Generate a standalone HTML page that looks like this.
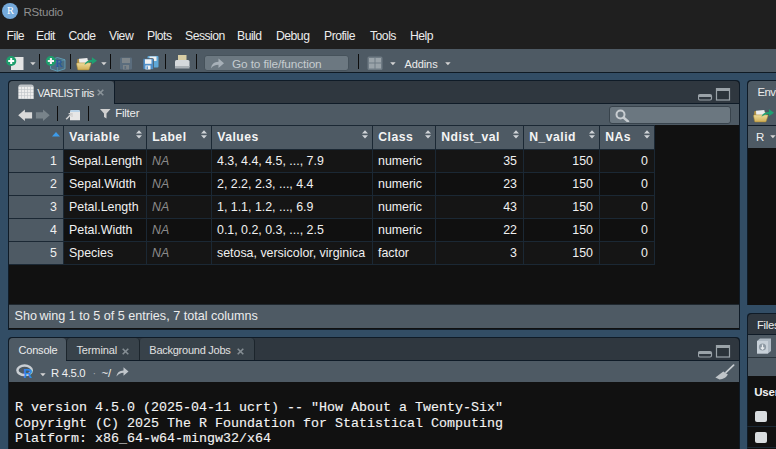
<!DOCTYPE html>
<html><head><meta charset="utf-8">
<style>
*{margin:0;padding:0;box-sizing:border-box}
html,body{width:776px;height:449px;overflow:hidden}
body{position:relative;background:#324d65;font-family:"Liberation Sans",sans-serif}
.a{position:absolute}
.t{position:absolute;white-space:nowrap;line-height:1}
</style></head><body>
<div class="a" style="left:0px;top:0px;width:776px;height:24px;background:#1f1f1f;"></div><svg class="a" style="left:2px;top:3px;" width="16" height="16" viewBox="0 0 16 16"><circle cx="8" cy="8" r="8" fill="#75aadb"/></svg><div class="t" style="left:5.4px;top:6.01px;font-size:10.5px;color:#ffffff;font-weight:normal;font-style:normal;font-family:'Liberation Serif',serif;width:10px;text-align:center;">R</div><div class="t" style="left:23.5px;top:6.86px;font-size:11.5px;color:#8f8f8f;font-weight:normal;font-style:normal;font-family:'Liberation Sans',sans-serif;letter-spacing:-0.2px;">RStudio</div><div class="a" style="left:0px;top:24px;width:776px;height:25px;background:#1f1f1f;"></div><div class="t" style="left:6.5px;top:30.27px;font-size:12.2px;color:#ececec;font-weight:normal;font-style:normal;font-family:'Liberation Sans',sans-serif;letter-spacing:-0.5px;">File</div><div class="t" style="left:36px;top:30.27px;font-size:12.2px;color:#ececec;font-weight:normal;font-style:normal;font-family:'Liberation Sans',sans-serif;letter-spacing:-0.5px;">Edit</div><div class="t" style="left:68.5px;top:30.27px;font-size:12.2px;color:#ececec;font-weight:normal;font-style:normal;font-family:'Liberation Sans',sans-serif;letter-spacing:-0.5px;">Code</div><div class="t" style="left:109px;top:30.27px;font-size:12.2px;color:#ececec;font-weight:normal;font-style:normal;font-family:'Liberation Sans',sans-serif;letter-spacing:-0.5px;">View</div><div class="t" style="left:147px;top:30.27px;font-size:12.2px;color:#ececec;font-weight:normal;font-style:normal;font-family:'Liberation Sans',sans-serif;letter-spacing:-0.5px;">Plots</div><div class="t" style="left:185px;top:30.27px;font-size:12.2px;color:#ececec;font-weight:normal;font-style:normal;font-family:'Liberation Sans',sans-serif;letter-spacing:-0.5px;">Session</div><div class="t" style="left:237px;top:30.27px;font-size:12.2px;color:#ececec;font-weight:normal;font-style:normal;font-family:'Liberation Sans',sans-serif;letter-spacing:-0.5px;">Build</div><div class="t" style="left:276px;top:30.27px;font-size:12.2px;color:#ececec;font-weight:normal;font-style:normal;font-family:'Liberation Sans',sans-serif;letter-spacing:-0.5px;">Debug</div><div class="t" style="left:324px;top:30.27px;font-size:12.2px;color:#ececec;font-weight:normal;font-style:normal;font-family:'Liberation Sans',sans-serif;letter-spacing:-0.5px;">Profile</div><div class="t" style="left:370px;top:30.27px;font-size:12.2px;color:#ececec;font-weight:normal;font-style:normal;font-family:'Liberation Sans',sans-serif;letter-spacing:-0.5px;">Tools</div><div class="t" style="left:410px;top:30.27px;font-size:12.2px;color:#ececec;font-weight:normal;font-style:normal;font-family:'Liberation Sans',sans-serif;letter-spacing:-0.5px;">Help</div><div class="a" style="left:0px;top:49px;width:776px;height:23px;background:#4e5a64;"></div><div class="a" style="left:0px;top:72px;width:776px;height:1px;background:#0f1a24;"></div><svg class="a" style="left:5px;top:55px;" width="20" height="16" viewBox="0 0 20 16"><rect x="6" y="2" width="12.5" height="13" fill="#e4e4e4"/><circle cx="6.2" cy="6" r="5.1" fill="#1e9e6c"/><path d="M6.2 3V9M3.2 6H9.2" stroke="#fff" stroke-width="2"/></svg><svg class="a" style="left:29.8px;top:62px;" width="6" height="4" viewBox="0 0 6 4"><path d="M0.2 0.2H5.6L2.9 3.2Z" fill="#d4d4d4"/></svg><div class="a" style="left:39px;top:54px;width:1px;height:15px;background:#0d0d0d;"></div><svg class="a" style="left:45px;top:55px;" width="22" height="17" viewBox="0 0 22 17"><path d="M5.5 4.8L12.5 2.5L20 4.8V13.8L12.5 16.2L5.5 13.8Z" fill="#4d8fb0" fill-opacity="0.38" stroke="#67b3cf" stroke-opacity="0.75" stroke-width="0.9"/><path d="M5.5 4.8L12.5 7.2L20 4.8M12.5 7.2V16.2" stroke="#67b3cf" stroke-opacity="0.5" stroke-width="0.8" fill="none"/><text x="10.6" y="11.8" font-family="Liberation Serif" font-weight="bold" font-size="9.8" fill="#2a5a9c">R</text><circle cx="5.9" cy="6" r="5.1" fill="#1e9e6c"/><path d="M5.9 2.9V9.1M2.8 6H9" stroke="#f4f0f2" stroke-width="2.1"/></svg><div class="a" style="left:70px;top:54px;width:1px;height:15px;background:#0d0d0d;"></div><svg class="a" style="left:76px;top:56px;" width="22" height="15" viewBox="0 0 22 15"><defs><linearGradient id="fg1" x1="0" y1="0" x2="0" y2="1"><stop offset="0" stop-color="#efdc9c"/><stop offset="1" stop-color="#cfae55"/></linearGradient></defs><path d="M1.2 4.2Q1.2 3 2.4 3H5.8L7 4.2H12.5Q13.3 4.2 13.3 5V8H1.2Z" fill="#b39448"/><path d="M3 2.7L11.3 2.1L12.7 8H3.3Z" fill="#ededed"/><path d="M0.5 7.7Q0.6 6.9 1.3 6.9H14.4Q15.3 6.9 15 7.7L13.2 13.3Q13 13.9 12.4 13.9H2.3Q1.7 13.9 1.6 13.3Z" fill="url(#fg1)" stroke="#a88936" stroke-width="0.55"/><path d="M8.6 8.9C9.3 5.7 12.2 4 15.9 4V1.3L21 4.8L15.9 8.3V5.9C12.9 5.9 10.5 6.9 8.6 8.9Z" fill="#1fa072"/></svg><svg class="a" style="left:100.5px;top:62px;" width="6" height="4" viewBox="0 0 6 4"><path d="M0.2 0.2H5.6L2.9 3.2Z" fill="#d4d4d4"/></svg><div class="a" style="left:110px;top:54px;width:1px;height:15px;background:#0d0d0d;"></div><svg class="a" style="left:119px;top:57px;" width="14" height="13" viewBox="0 0 14 13"><rect x="1" y="0.5" width="12" height="12" rx="1" fill="#5b6d7d"/><rect x="3" y="1" width="8" height="5" fill="#7e868b"/><rect x="4" y="8" width="6" height="4.5" fill="#7c8489"/><rect x="5.5" y="9" width="1.6" height="3" fill="#5b6d7d"/></svg><svg class="a" style="left:142px;top:56px;" width="17" height="14" viewBox="0 0 17 14"><rect x="5.5" y="0" width="11" height="11.5" rx="1" fill="#5fa8d8"/><rect x="7.5" y="0.5" width="7" height="4.5" fill="#f0f0f0"/><rect x="1" y="2.5" width="10.5" height="11" rx="1" fill="#4f8fc9" stroke="#4e5a64" stroke-width="0.8"/><rect x="3" y="3.3" width="6.5" height="4.5" fill="#f2f2f2"/><rect x="3.5" y="9.5" width="5" height="4" fill="#f2f2f2"/><rect x="4.5" y="10.3" width="1.4" height="3" fill="#4f8fc9"/></svg><div class="a" style="left:165px;top:54px;width:1px;height:15px;background:#0d0d0d;"></div><svg class="a" style="left:174px;top:55px;" width="17" height="15" viewBox="0 0 17 15"><rect x="4" y="0" width="8.5" height="6" fill="#d8cda4"/><path d="M1 6.5Q1 5 2.5 5H14Q15.5 5 15.5 6.5V12H1Z" fill="#d4d8db"/><rect x="1" y="11" width="14.5" height="2.5" fill="#a9b0b5"/></svg><div class="a" style="left:196px;top:54px;width:1px;height:15px;background:#0d0d0d;"></div><div class="a" style="left:204px;top:55px;width:145px;height:16px;background:#6c7881;border-radius:3px;border:1px solid #46525b"></div><svg class="a" style="left:210px;top:58px;" width="15" height="11" viewBox="0 0 15 11"><path d="M1 10.5C1.5 6 4 3.8 8.5 3.7V0.5L14 5.2L8.5 10V6.8C5 6.8 2.8 8 1 10.5Z" fill="#a7b0b8"/></svg><div class="t" style="left:232px;top:58.61px;font-size:11.8px;color:#c6ccd0;font-weight:normal;font-style:normal;font-family:'Liberation Sans',sans-serif;letter-spacing:-0.12px;">Go to file/function</div><div class="a" style="left:358px;top:54px;width:1px;height:15px;background:#0d0d0d;"></div><svg class="a" style="left:367px;top:56px;" width="16" height="14" viewBox="0 0 16 14"><rect x="0.5" y="0.5" width="15" height="13.5" rx="1.5" fill="#6f7b84"/><rect x="2" y="2" width="5.5" height="4.5" fill="#9aa3a9"/><rect x="8.5" y="2" width="5.5" height="4.5" fill="#9aa3a9"/><rect x="2" y="7.5" width="5.5" height="5" fill="#9aa3a9"/><rect x="8.5" y="7.5" width="5.5" height="5" fill="#9aa3a9"/></svg><svg class="a" style="left:389.5px;top:62px;" width="6" height="4" viewBox="0 0 6 4"><path d="M0.2 0.2H5.6L2.9 3.2Z" fill="#d4d4d4"/></svg><div class="t" style="left:404.5px;top:58.69px;font-size:11px;color:#ececec;font-weight:normal;font-style:normal;font-family:'Liberation Sans',sans-serif;letter-spacing:-0.1px;">Addins</div><svg class="a" style="left:444.5px;top:62px;" width="6" height="4" viewBox="0 0 6 4"><path d="M0.2 0.2H5.6L2.9 3.2Z" fill="#d4d4d4"/></svg><div class="a" style="left:8px;top:80px;width:732px;height:250px;background:#0f1b27;border-radius:4px 4px 0 0"></div><div class="a" style="left:9px;top:81px;width:730px;height:248px;background:#111111;border-radius:4px 4px 0 0"></div><div class="a" style="left:9px;top:81px;width:730px;height:22px;background:#2f373f;border-radius:4px 4px 0 0"></div><div class="a" style="left:114px;top:103px;width:625px;height:1px;background:#0f1b27;"></div><div class="a" style="left:114px;top:81px;width:1px;height:22px;background:#0f1b27;"></div><div class="a" style="left:9px;top:81px;width:105px;height:23px;background:#4e5a64;border-radius:4px 4px 0 0"></div><svg class="a" style="left:18px;top:84px;" width="16" height="15" viewBox="0 0 16 15"><path d="M0.3 3Q0.3 0.5 2.8 0.5H13.2Q15.7 0.5 15.7 3V15H0.3Z" fill="#bfc4c8"/><rect x="0.70" y="2.90" width="2.45" height="2.45" fill="#ededed"/><rect x="0.70" y="5.95" width="2.45" height="2.45" fill="#ededed"/><rect x="0.70" y="9.00" width="2.45" height="2.45" fill="#ededed"/><rect x="0.70" y="12.05" width="2.45" height="2.45" fill="#ededed"/><rect x="3.74" y="2.90" width="2.45" height="2.45" fill="#ededed"/><rect x="3.74" y="5.95" width="2.45" height="2.45" fill="#ededed"/><rect x="3.74" y="9.00" width="2.45" height="2.45" fill="#ededed"/><rect x="3.74" y="12.05" width="2.45" height="2.45" fill="#ededed"/><rect x="6.78" y="2.90" width="2.45" height="2.45" fill="#ededed"/><rect x="6.78" y="5.95" width="2.45" height="2.45" fill="#ededed"/><rect x="6.78" y="9.00" width="2.45" height="2.45" fill="#ededed"/><rect x="6.78" y="12.05" width="2.45" height="2.45" fill="#ededed"/><rect x="9.82" y="2.90" width="2.45" height="2.45" fill="#ededed"/><rect x="9.82" y="5.95" width="2.45" height="2.45" fill="#ededed"/><rect x="9.82" y="9.00" width="2.45" height="2.45" fill="#ededed"/><rect x="9.82" y="12.05" width="2.45" height="2.45" fill="#ededed"/><rect x="12.86" y="2.90" width="2.45" height="2.45" fill="#ededed"/><rect x="12.86" y="5.95" width="2.45" height="2.45" fill="#ededed"/><rect x="12.86" y="9.00" width="2.45" height="2.45" fill="#ededed"/><rect x="12.86" y="12.05" width="2.45" height="2.45" fill="#ededed"/></svg><div class="t" style="left:37.3px;top:88.19px;font-size:11px;color:#ececec;font-weight:normal;font-style:normal;font-family:'Liberation Sans',sans-serif;letter-spacing:-0.45px;">VARLIST iris</div><svg class="a" style="left:97px;top:89px;" width="7" height="7" viewBox="0 0 7 7"><path d="M0.7 0.7L6.3 6.3M6.3 0.7L0.7 6.3" stroke="#8b949a" stroke-width="1.6"/></svg><svg class="a" style="left:698px;top:88px;" width="33" height="13" viewBox="0 0 33 13"><rect x="0.5" y="6.5" width="13" height="5.5" rx="1.5" fill="none" stroke="#9aa2a8" stroke-width="1.2"/><rect x="1" y="7" width="12" height="2" fill="#9aa2a8"/><rect x="18.5" y="0.6" width="13" height="11.4" fill="#2b333a" stroke="#9aa2a8" stroke-width="1.2"/><rect x="18.5" y="0.6" width="13" height="2.4" fill="#9aa2a8"/></svg><div class="a" style="left:9px;top:104px;width:730px;height:21px;background:#4e5a64;"></div><svg class="a" style="left:18px;top:109px;" width="32" height="13" viewBox="0 0 32 13"><path d="M0.2 6.3L6.9 0.6V3.3H14.1V9.6H6.9V12.1Z" fill="#dadada"/><path d="M31.7 6.3L25 0.6V3.3H17.9V9.6H25V12.1Z" fill="#78838a"/></svg><div class="a" style="left:57px;top:106px;width:1px;height:15px;background:#0d0d0d;"></div><svg class="a" style="left:65px;top:109px;" width="16" height="12" viewBox="0 0 16 12"><path d="M5 2.5Q5 0.9 6.6 0.9H13.4Q15 0.9 15 2.5V11.2H5Z" fill="#e6e6e6"/><path d="M5 2.5Q5 0.9 6.6 0.9H13.4Q15 0.9 15 2.5V3H5Z" fill="#b9d3e8"/><path d="M1.2 10.2L6.6 4.8" stroke="#d0d0d0" stroke-width="1.6"/><path d="M3.6 4.6H7V8" stroke="#d0d0d0" stroke-width="1.3" fill="none"/></svg><div class="a" style="left:88px;top:106px;width:1px;height:15px;background:#0d0d0d;"></div><svg class="a" style="left:100px;top:109px;" width="11" height="10" viewBox="0 0 11 10"><path d="M0 0H10.5L6.5 4.5V9.5L4 8V4.5Z" fill="#d0d0d0"/></svg><div class="t" style="left:115.2px;top:108.35px;font-size:11.4px;color:#ececec;font-weight:normal;font-style:normal;font-family:'Liberation Sans',sans-serif;letter-spacing:-0.2px;">Filter</div><div class="a" style="left:609px;top:106px;width:122px;height:18px;background:#6b7780;border-radius:3px;border:1px solid #38434c"></div><svg class="a" style="left:615px;top:109px;" width="15" height="13" viewBox="0 0 15 13"><circle cx="5.5" cy="5.5" r="4" fill="none" stroke="#c8cdd1" stroke-width="2"/><path d="M8.5 8.5L13 12.5" stroke="#c8cdd1" stroke-width="2.4" stroke-linecap="round"/></svg><div class="a" style="left:9px;top:125px;width:646px;height:140px;background:#1b2834;"></div><div class="a" style="left:9px;top:126px;width:54px;height:23px;background:#4e5a64;"></div><div class="a" style="left:64px;top:126px;width:82px;height:23px;background:#4e5a64;"></div><div class="a" style="left:147px;top:126px;width:64px;height:23px;background:#4e5a64;"></div><div class="a" style="left:212px;top:126px;width:160px;height:23px;background:#4e5a64;"></div><div class="a" style="left:373px;top:126px;width:62px;height:23px;background:#4e5a64;"></div><div class="a" style="left:436px;top:126px;width:87px;height:23px;background:#4e5a64;"></div><div class="a" style="left:524px;top:126px;width:75px;height:23px;background:#4e5a64;"></div><div class="a" style="left:600px;top:126px;width:54px;height:23px;background:#4e5a64;"></div><div class="t" style="left:69.2px;top:130.67px;font-size:12.2px;color:#f4f4f4;font-weight:bold;font-style:normal;font-family:'Liberation Sans',sans-serif;letter-spacing:0.5px;">Variable</div><svg class="a" style="left:135.5px;top:129.5px;" width="6" height="9" viewBox="0 0 6 9"><path d="M0 3.5L3 0.3L6 3.5Z M0 5.3L3 8.5L6 5.3Z" fill="#cfd3d7"/></svg><div class="t" style="left:152.2px;top:130.67px;font-size:12.2px;color:#f4f4f4;font-weight:bold;font-style:normal;font-family:'Liberation Sans',sans-serif;letter-spacing:0.5px;">Label</div><svg class="a" style="left:200.5px;top:129.5px;" width="6" height="9" viewBox="0 0 6 9"><path d="M0 3.5L3 0.3L6 3.5Z M0 5.3L3 8.5L6 5.3Z" fill="#cfd3d7"/></svg><div class="t" style="left:217.2px;top:130.67px;font-size:12.2px;color:#f4f4f4;font-weight:bold;font-style:normal;font-family:'Liberation Sans',sans-serif;letter-spacing:0.5px;">Values</div><svg class="a" style="left:361.5px;top:129.5px;" width="6" height="9" viewBox="0 0 6 9"><path d="M0 3.5L3 0.3L6 3.5Z M0 5.3L3 8.5L6 5.3Z" fill="#cfd3d7"/></svg><div class="t" style="left:378.2px;top:130.67px;font-size:12.2px;color:#f4f4f4;font-weight:bold;font-style:normal;font-family:'Liberation Sans',sans-serif;letter-spacing:0.5px;">Class</div><svg class="a" style="left:424.5px;top:129.5px;" width="6" height="9" viewBox="0 0 6 9"><path d="M0 3.5L3 0.3L6 3.5Z M0 5.3L3 8.5L6 5.3Z" fill="#cfd3d7"/></svg><div class="t" style="left:441.2px;top:130.67px;font-size:12.2px;color:#f4f4f4;font-weight:bold;font-style:normal;font-family:'Liberation Sans',sans-serif;letter-spacing:0.5px;">Ndist_val</div><svg class="a" style="left:512.5px;top:129.5px;" width="6" height="9" viewBox="0 0 6 9"><path d="M0 3.5L3 0.3L6 3.5Z M0 5.3L3 8.5L6 5.3Z" fill="#cfd3d7"/></svg><div class="t" style="left:529.2px;top:130.67px;font-size:12.2px;color:#f4f4f4;font-weight:bold;font-style:normal;font-family:'Liberation Sans',sans-serif;letter-spacing:0.5px;">N_valid</div><svg class="a" style="left:588.5px;top:129.5px;" width="6" height="9" viewBox="0 0 6 9"><path d="M0 3.5L3 0.3L6 3.5Z M0 5.3L3 8.5L6 5.3Z" fill="#cfd3d7"/></svg><div class="t" style="left:605.2px;top:130.67px;font-size:12.2px;color:#f4f4f4;font-weight:bold;font-style:normal;font-family:'Liberation Sans',sans-serif;letter-spacing:0.5px;">NAs</div><svg class="a" style="left:643.5px;top:129.5px;" width="6" height="9" viewBox="0 0 6 9"><path d="M0 3.5L3 0.3L6 3.5Z M0 5.3L3 8.5L6 5.3Z" fill="#cfd3d7"/></svg><svg class="a" style="left:52px;top:132px;" width="8" height="5" viewBox="0 0 8 5"><path d="M0 4.5L4 0L8 4.5Z" fill="#3d9bea"/></svg><div class="a" style="left:9px;top:150px;width:54px;height:22px;background:#4e5a64;"></div><div class="a" style="left:64px;top:150px;width:82px;height:22px;background:#151515;"></div><div class="a" style="left:147px;top:150px;width:64px;height:22px;background:#151515;"></div><div class="a" style="left:212px;top:150px;width:160px;height:22px;background:#151515;"></div><div class="a" style="left:373px;top:150px;width:62px;height:22px;background:#151515;"></div><div class="a" style="left:436px;top:150px;width:87px;height:22px;background:#151515;"></div><div class="a" style="left:524px;top:150px;width:75px;height:22px;background:#151515;"></div><div class="a" style="left:600px;top:150px;width:54px;height:22px;background:#151515;"></div><div class="t" style="left:-3px;top:154.50px;font-size:12.4px;color:#f0f0f0;font-weight:normal;font-style:normal;font-family:'Liberation Sans',sans-serif;width:60px;text-align:right;">1</div><div class="t" style="left:69px;top:154.50px;font-size:12.4px;color:#f0f0f0;font-weight:normal;font-style:normal;font-family:'Liberation Sans',sans-serif;">Sepal.Length</div><div class="t" style="left:152px;top:154.50px;font-size:12.4px;color:#8a8a8a;font-weight:normal;font-style:italic;font-family:'Liberation Sans',sans-serif;">NA</div><div class="t" style="left:217px;top:154.50px;font-size:12.4px;color:#f0f0f0;font-weight:normal;font-style:normal;font-family:'Liberation Sans',sans-serif;">4.3, 4.4, 4.5, ..., 7.9</div><div class="t" style="left:378px;top:154.50px;font-size:12.4px;color:#f0f0f0;font-weight:normal;font-style:normal;font-family:'Liberation Sans',sans-serif;">numeric</div><div class="t" style="left:457px;top:154.50px;font-size:12.4px;color:#f0f0f0;font-weight:normal;font-style:normal;font-family:'Liberation Sans',sans-serif;width:60px;text-align:right;">35</div><div class="t" style="left:533px;top:154.50px;font-size:12.4px;color:#f0f0f0;font-weight:normal;font-style:normal;font-family:'Liberation Sans',sans-serif;width:60px;text-align:right;">150</div><div class="t" style="left:588px;top:154.50px;font-size:12.4px;color:#f0f0f0;font-weight:normal;font-style:normal;font-family:'Liberation Sans',sans-serif;width:60px;text-align:right;">0</div><div class="a" style="left:9px;top:173px;width:54px;height:22px;background:#4e5a64;"></div><div class="a" style="left:64px;top:173px;width:82px;height:22px;background:#101010;"></div><div class="a" style="left:147px;top:173px;width:64px;height:22px;background:#101010;"></div><div class="a" style="left:212px;top:173px;width:160px;height:22px;background:#101010;"></div><div class="a" style="left:373px;top:173px;width:62px;height:22px;background:#101010;"></div><div class="a" style="left:436px;top:173px;width:87px;height:22px;background:#101010;"></div><div class="a" style="left:524px;top:173px;width:75px;height:22px;background:#101010;"></div><div class="a" style="left:600px;top:173px;width:54px;height:22px;background:#101010;"></div><div class="t" style="left:-3px;top:177.50px;font-size:12.4px;color:#f0f0f0;font-weight:normal;font-style:normal;font-family:'Liberation Sans',sans-serif;width:60px;text-align:right;">2</div><div class="t" style="left:69px;top:177.50px;font-size:12.4px;color:#f0f0f0;font-weight:normal;font-style:normal;font-family:'Liberation Sans',sans-serif;">Sepal.Width</div><div class="t" style="left:152px;top:177.50px;font-size:12.4px;color:#8a8a8a;font-weight:normal;font-style:italic;font-family:'Liberation Sans',sans-serif;">NA</div><div class="t" style="left:217px;top:177.50px;font-size:12.4px;color:#f0f0f0;font-weight:normal;font-style:normal;font-family:'Liberation Sans',sans-serif;">2, 2.2, 2.3, ..., 4.4</div><div class="t" style="left:378px;top:177.50px;font-size:12.4px;color:#f0f0f0;font-weight:normal;font-style:normal;font-family:'Liberation Sans',sans-serif;">numeric</div><div class="t" style="left:457px;top:177.50px;font-size:12.4px;color:#f0f0f0;font-weight:normal;font-style:normal;font-family:'Liberation Sans',sans-serif;width:60px;text-align:right;">23</div><div class="t" style="left:533px;top:177.50px;font-size:12.4px;color:#f0f0f0;font-weight:normal;font-style:normal;font-family:'Liberation Sans',sans-serif;width:60px;text-align:right;">150</div><div class="t" style="left:588px;top:177.50px;font-size:12.4px;color:#f0f0f0;font-weight:normal;font-style:normal;font-family:'Liberation Sans',sans-serif;width:60px;text-align:right;">0</div><div class="a" style="left:9px;top:196px;width:54px;height:22px;background:#4e5a64;"></div><div class="a" style="left:64px;top:196px;width:82px;height:22px;background:#151515;"></div><div class="a" style="left:147px;top:196px;width:64px;height:22px;background:#151515;"></div><div class="a" style="left:212px;top:196px;width:160px;height:22px;background:#151515;"></div><div class="a" style="left:373px;top:196px;width:62px;height:22px;background:#151515;"></div><div class="a" style="left:436px;top:196px;width:87px;height:22px;background:#151515;"></div><div class="a" style="left:524px;top:196px;width:75px;height:22px;background:#151515;"></div><div class="a" style="left:600px;top:196px;width:54px;height:22px;background:#151515;"></div><div class="t" style="left:-3px;top:200.50px;font-size:12.4px;color:#f0f0f0;font-weight:normal;font-style:normal;font-family:'Liberation Sans',sans-serif;width:60px;text-align:right;">3</div><div class="t" style="left:69px;top:200.50px;font-size:12.4px;color:#f0f0f0;font-weight:normal;font-style:normal;font-family:'Liberation Sans',sans-serif;">Petal.Length</div><div class="t" style="left:152px;top:200.50px;font-size:12.4px;color:#8a8a8a;font-weight:normal;font-style:italic;font-family:'Liberation Sans',sans-serif;">NA</div><div class="t" style="left:217px;top:200.50px;font-size:12.4px;color:#f0f0f0;font-weight:normal;font-style:normal;font-family:'Liberation Sans',sans-serif;">1, 1.1, 1.2, ..., 6.9</div><div class="t" style="left:378px;top:200.50px;font-size:12.4px;color:#f0f0f0;font-weight:normal;font-style:normal;font-family:'Liberation Sans',sans-serif;">numeric</div><div class="t" style="left:457px;top:200.50px;font-size:12.4px;color:#f0f0f0;font-weight:normal;font-style:normal;font-family:'Liberation Sans',sans-serif;width:60px;text-align:right;">43</div><div class="t" style="left:533px;top:200.50px;font-size:12.4px;color:#f0f0f0;font-weight:normal;font-style:normal;font-family:'Liberation Sans',sans-serif;width:60px;text-align:right;">150</div><div class="t" style="left:588px;top:200.50px;font-size:12.4px;color:#f0f0f0;font-weight:normal;font-style:normal;font-family:'Liberation Sans',sans-serif;width:60px;text-align:right;">0</div><div class="a" style="left:9px;top:219px;width:54px;height:22px;background:#4e5a64;"></div><div class="a" style="left:64px;top:219px;width:82px;height:22px;background:#101010;"></div><div class="a" style="left:147px;top:219px;width:64px;height:22px;background:#101010;"></div><div class="a" style="left:212px;top:219px;width:160px;height:22px;background:#101010;"></div><div class="a" style="left:373px;top:219px;width:62px;height:22px;background:#101010;"></div><div class="a" style="left:436px;top:219px;width:87px;height:22px;background:#101010;"></div><div class="a" style="left:524px;top:219px;width:75px;height:22px;background:#101010;"></div><div class="a" style="left:600px;top:219px;width:54px;height:22px;background:#101010;"></div><div class="t" style="left:-3px;top:223.50px;font-size:12.4px;color:#f0f0f0;font-weight:normal;font-style:normal;font-family:'Liberation Sans',sans-serif;width:60px;text-align:right;">4</div><div class="t" style="left:69px;top:223.50px;font-size:12.4px;color:#f0f0f0;font-weight:normal;font-style:normal;font-family:'Liberation Sans',sans-serif;">Petal.Width</div><div class="t" style="left:152px;top:223.50px;font-size:12.4px;color:#8a8a8a;font-weight:normal;font-style:italic;font-family:'Liberation Sans',sans-serif;">NA</div><div class="t" style="left:217px;top:223.50px;font-size:12.4px;color:#f0f0f0;font-weight:normal;font-style:normal;font-family:'Liberation Sans',sans-serif;">0.1, 0.2, 0.3, ..., 2.5</div><div class="t" style="left:378px;top:223.50px;font-size:12.4px;color:#f0f0f0;font-weight:normal;font-style:normal;font-family:'Liberation Sans',sans-serif;">numeric</div><div class="t" style="left:457px;top:223.50px;font-size:12.4px;color:#f0f0f0;font-weight:normal;font-style:normal;font-family:'Liberation Sans',sans-serif;width:60px;text-align:right;">22</div><div class="t" style="left:533px;top:223.50px;font-size:12.4px;color:#f0f0f0;font-weight:normal;font-style:normal;font-family:'Liberation Sans',sans-serif;width:60px;text-align:right;">150</div><div class="t" style="left:588px;top:223.50px;font-size:12.4px;color:#f0f0f0;font-weight:normal;font-style:normal;font-family:'Liberation Sans',sans-serif;width:60px;text-align:right;">0</div><div class="a" style="left:9px;top:242px;width:54px;height:22px;background:#4e5a64;"></div><div class="a" style="left:64px;top:242px;width:82px;height:22px;background:#151515;"></div><div class="a" style="left:147px;top:242px;width:64px;height:22px;background:#151515;"></div><div class="a" style="left:212px;top:242px;width:160px;height:22px;background:#151515;"></div><div class="a" style="left:373px;top:242px;width:62px;height:22px;background:#151515;"></div><div class="a" style="left:436px;top:242px;width:87px;height:22px;background:#151515;"></div><div class="a" style="left:524px;top:242px;width:75px;height:22px;background:#151515;"></div><div class="a" style="left:600px;top:242px;width:54px;height:22px;background:#151515;"></div><div class="t" style="left:-3px;top:246.50px;font-size:12.4px;color:#f0f0f0;font-weight:normal;font-style:normal;font-family:'Liberation Sans',sans-serif;width:60px;text-align:right;">5</div><div class="t" style="left:69px;top:246.50px;font-size:12.4px;color:#f0f0f0;font-weight:normal;font-style:normal;font-family:'Liberation Sans',sans-serif;">Species</div><div class="t" style="left:152px;top:246.50px;font-size:12.4px;color:#8a8a8a;font-weight:normal;font-style:italic;font-family:'Liberation Sans',sans-serif;">NA</div><div class="t" style="left:217px;top:246.50px;font-size:12.4px;color:#f0f0f0;font-weight:normal;font-style:normal;font-family:'Liberation Sans',sans-serif;">setosa, versicolor, virginica</div><div class="t" style="left:378px;top:246.50px;font-size:12.4px;color:#f0f0f0;font-weight:normal;font-style:normal;font-family:'Liberation Sans',sans-serif;">factor</div><div class="t" style="left:457px;top:246.50px;font-size:12.4px;color:#f0f0f0;font-weight:normal;font-style:normal;font-family:'Liberation Sans',sans-serif;width:60px;text-align:right;">3</div><div class="t" style="left:533px;top:246.50px;font-size:12.4px;color:#f0f0f0;font-weight:normal;font-style:normal;font-family:'Liberation Sans',sans-serif;width:60px;text-align:right;">150</div><div class="t" style="left:588px;top:246.50px;font-size:12.4px;color:#f0f0f0;font-weight:normal;font-style:normal;font-family:'Liberation Sans',sans-serif;width:60px;text-align:right;">0</div><div class="a" style="left:9px;top:304px;width:730px;height:24px;background:#4e5a64;"></div><div class="a" style="left:9px;top:304px;width:730px;height:1px;background:#1f272e;"></div><div class="t" style="left:14.5px;top:309.63px;font-size:12.6px;color:#ececec;font-weight:normal;font-style:normal;font-family:'Liberation Sans',sans-serif;">Sho<span style="margin-left:2.5px"></span>wing 1 to 5 of 5 entries, 7 total columns</div><div class="a" style="left:8px;top:337px;width:732px;height:112px;background:#0f1b27;border-radius:4px 4px 0 0"></div><div class="a" style="left:9px;top:338px;width:730px;height:111px;background:#111111;border-radius:4px 4px 0 0"></div><div class="a" style="left:9px;top:338px;width:730px;height:22px;background:#2f373f;border-radius:4px 4px 0 0"></div><div class="a" style="left:66px;top:338px;width:74px;height:22px;background:#38424a;border-radius:4px 4px 0 0;border-left:1px solid #1c252c;border-right:1px solid #1c252c"></div><div class="a" style="left:140px;top:338px;width:115px;height:22px;background:#38424a;border-radius:4px 4px 0 0;border-right:1px solid #1c252c"></div><div class="a" style="left:66px;top:360px;width:673px;height:1px;background:#0f1b27;"></div><div class="a" style="left:9px;top:338px;width:57px;height:23px;background:#4e5a64;border-radius:4px 4px 0 0"></div><div class="t" style="left:18.5px;top:344.89px;font-size:11px;color:#ececec;font-weight:normal;font-style:normal;font-family:'Liberation Sans',sans-serif;letter-spacing:-0.2px;">Console</div><div class="t" style="left:76.4px;top:344.89px;font-size:11px;color:#e0e0e0;font-weight:normal;font-style:normal;font-family:'Liberation Sans',sans-serif;letter-spacing:-0.1px;">Terminal</div><svg class="a" style="left:122px;top:347.5px;" width="7" height="7" viewBox="0 0 7 7"><path d="M0.7 0.7L6.3 6.3M6.3 0.7L0.7 6.3" stroke="#858e94" stroke-width="1.6"/></svg><div class="t" style="left:149.3px;top:344.89px;font-size:11px;color:#e0e0e0;font-weight:normal;font-style:normal;font-family:'Liberation Sans',sans-serif;letter-spacing:-0.25px;">Background Jobs</div><svg class="a" style="left:237px;top:347.5px;" width="7" height="7" viewBox="0 0 7 7"><path d="M0.7 0.7L6.3 6.3M6.3 0.7L0.7 6.3" stroke="#858e94" stroke-width="1.6"/></svg><svg class="a" style="left:698px;top:345px;" width="33" height="13" viewBox="0 0 33 13"><rect x="0.5" y="6.5" width="13" height="5.5" rx="1.5" fill="none" stroke="#9aa2a8" stroke-width="1.2"/><rect x="1" y="7" width="12" height="2" fill="#9aa2a8"/><rect x="18.5" y="0.6" width="13" height="11.4" fill="#2b333a" stroke="#9aa2a8" stroke-width="1.2"/><rect x="18.5" y="0.6" width="13" height="2.4" fill="#9aa2a8"/></svg><div class="a" style="left:9px;top:361px;width:730px;height:21px;background:#4e5a64;"></div><svg class="a" style="left:16px;top:364px;" width="19" height="15" viewBox="0 0 19 15"><ellipse cx="8.6" cy="6.3" rx="7.2" ry="4.7" fill="none" stroke="#c9ced3" stroke-width="2.5"/><path d="M9 8.5 Q12 10 14.5 9" stroke="#4e5a64" stroke-width="0" fill="none"/><text x="7.4" y="13.8" font-family="Liberation Sans" font-weight="bold" font-size="12.3" fill="#2e86ea">R</text></svg><svg class="a" style="left:39.5px;top:373px;" width="6" height="4" viewBox="0 0 6 4"><path d="M0.2 0.2H5.6L2.9 3.2Z" fill="#d4d4d4"/></svg><div class="t" style="left:51px;top:367.73px;font-size:11.3px;color:#f0f0f0;font-weight:normal;font-style:normal;font-family:'Liberation Sans',sans-serif;letter-spacing:-0.3px;">R 4.5.0</div><div class="t" style="left:92.5px;top:367.69px;font-size:11px;color:#a0a6ab;font-weight:normal;font-style:normal;font-family:'Liberation Sans',sans-serif;">·</div><div class="t" style="left:101.5px;top:367.73px;font-size:11.3px;color:#f0f0f0;font-weight:normal;font-style:normal;font-family:'Liberation Sans',sans-serif;">~/</div><svg class="a" style="left:116px;top:367px;" width="13" height="10" viewBox="0 0 13 10"><path d="M0.5 9.5C1 5.5 3.5 3.5 7.5 3.4V0.3L12.5 4.5L7.5 8.7V5.8C4.5 5.8 2.5 7 0.5 9.5Z" fill="#c0c6cb"/></svg><svg class="a" style="left:714px;top:364px;" width="21" height="17" viewBox="0 0 21 17"><path d="M19.6 1.2L12 8.4" stroke="#c8cdd1" stroke-width="1.7" stroke-linecap="round"/><path d="M9.3 7.6L13.9 10.6Q11.2 15.2 5.6 15.6L1.4 13.6Q5.8 10.2 9.3 7.6Z" fill="#bfc4c8"/></svg><div class="t" style="left:15px;top:401.09px;font-size:13.33px;color:#f4f4f4;font-weight:normal;font-style:normal;font-family:'Liberation Mono',monospace;-webkit-text-stroke:0.12px #f4f4f4">R version 4.5.0 (2025-04-11 ucrt) -- "How About a Twenty-Six"</div><div class="t" style="left:15px;top:416.69px;font-size:13.33px;color:#f4f4f4;font-weight:normal;font-style:normal;font-family:'Liberation Mono',monospace;-webkit-text-stroke:0.12px #f4f4f4">Copyright (C) 2025 The R Foundation for Statistical Computing</div><div class="t" style="left:15px;top:432.39px;font-size:13.33px;color:#f4f4f4;font-weight:normal;font-style:normal;font-family:'Liberation Mono',monospace;-webkit-text-stroke:0.12px #f4f4f4">Platform: x86_64-w64-mingw32/x64</div><div class="a" style="left:747px;top:80px;width:40px;height:225px;background:#0f1b27;border-radius:4px 0 0 0"></div><div class="a" style="left:748px;top:81px;width:40px;height:224px;background:#111111;border-radius:4px 0 0 0"></div><div class="a" style="left:748px;top:81px;width:40px;height:22px;background:#4e5a64;border-radius:4px 0 0 0"></div><div class="t" style="left:757.4px;top:87.35px;font-size:11.4px;color:#ececec;font-weight:normal;font-style:normal;font-family:'Liberation Sans',sans-serif;letter-spacing:-0.5px;">Envi</div><div class="a" style="left:748px;top:103px;width:40px;height:22px;background:#4e5a64;"></div><svg class="a" style="left:753px;top:108px;" width="23" height="15" viewBox="0 0 23 15"><defs><linearGradient id="fg2" x1="0" y1="0" x2="0" y2="1"><stop offset="0" stop-color="#efdc9c"/><stop offset="1" stop-color="#cfae55"/></linearGradient></defs><path d="M1.2 4.2Q1.2 3 2.4 3H5.8L7 4.2H12.5Q13.3 4.2 13.3 5V8H1.2Z" fill="#b39448"/><path d="M3 2.7L11.3 2.1L12.7 8H3.3Z" fill="#ededed"/><path d="M0.5 7.7Q0.6 6.9 1.3 6.9H14.4Q15.3 6.9 15 7.7L13.2 13.3Q13 13.9 12.4 13.9H2.3Q1.7 13.9 1.6 13.3Z" fill="url(#fg2)" stroke="#a88936" stroke-width="0.55"/><path d="M8.6 8.9C9.3 5.7 12.2 4 15.9 4V1.3L21 4.8L15.9 8.3V5.9C12.9 5.9 10.5 6.9 8.6 8.9Z" fill="#1fa072"/></svg><div class="a" style="left:748px;top:125px;width:40px;height:1px;background:#0f1b27;"></div><div class="a" style="left:748px;top:126px;width:40px;height:22px;background:#4e5a64;"></div><div class="t" style="left:756px;top:132.26px;font-size:11.5px;color:#f0f0f0;font-weight:normal;font-style:normal;font-family:'Liberation Sans',sans-serif;">R</div><svg class="a" style="left:770px;top:135px;" width="6" height="4" viewBox="0 0 6 4"><path d="M0.2 0.2H5.6L2.9 3.2Z" fill="#d4d4d4"/></svg><div class="a" style="left:747px;top:313px;width:40px;height:136px;background:#0f1b27;border-radius:4px 0 0 0"></div><div class="a" style="left:748px;top:314px;width:40px;height:135px;background:#111111;border-radius:4px 0 0 0"></div><div class="a" style="left:748px;top:314px;width:40px;height:21px;background:#2f373f;border-radius:4px 0 0 0"></div><div class="t" style="left:757px;top:319.73px;font-size:11.3px;color:#ececec;font-weight:normal;font-style:normal;font-family:'Liberation Sans',sans-serif;letter-spacing:-0.3px;">Files</div><div class="a" style="left:748px;top:335px;width:40px;height:22px;background:#4e5a64;"></div><svg class="a" style="left:756px;top:338px;" width="16" height="16" viewBox="0 0 16 16"><path d="M1 3L4 0.5H15V13L12 15.5H1Z" fill="#aeb9c3"/><rect x="1" y="3" width="11" height="12.5" fill="#c7d0d8"/><circle cx="6.5" cy="9" r="3.6" fill="#8d99a3"/><path d="M6.5 6.5V11M4.8 9.5L6.5 11.2L8.2 9.5" stroke="#e8ecef" stroke-width="1.2" fill="none"/></svg><div class="a" style="left:748px;top:357px;width:40px;height:19px;background:#4d5963;"></div><div class="a" style="left:748px;top:334px;width:40px;height:1px;background:#0f1b27;"></div><div class="a" style="left:748px;top:357px;width:40px;height:1px;background:#2a343c;"></div><div class="t" style="left:754.2px;top:387.26px;font-size:11.5px;color:#f2f2f2;font-weight:bold;font-style:normal;font-family:'Liberation Sans',sans-serif;letter-spacing:-0.2px;">User</div><div class="a" style="left:755px;top:411px;width:12px;height:11px;background:#d8dcdf;border-radius:2px"></div><div class="a" style="left:755px;top:432px;width:12px;height:11px;background:#d8dcdf;border-radius:2px"></div><div class="a" style="left:747px;top:426px;width:40px;height:1px;background:#1b2834;"></div><div class="a" style="left:747px;top:447px;width:40px;height:1px;background:#1b2834;"></div></body></html>
